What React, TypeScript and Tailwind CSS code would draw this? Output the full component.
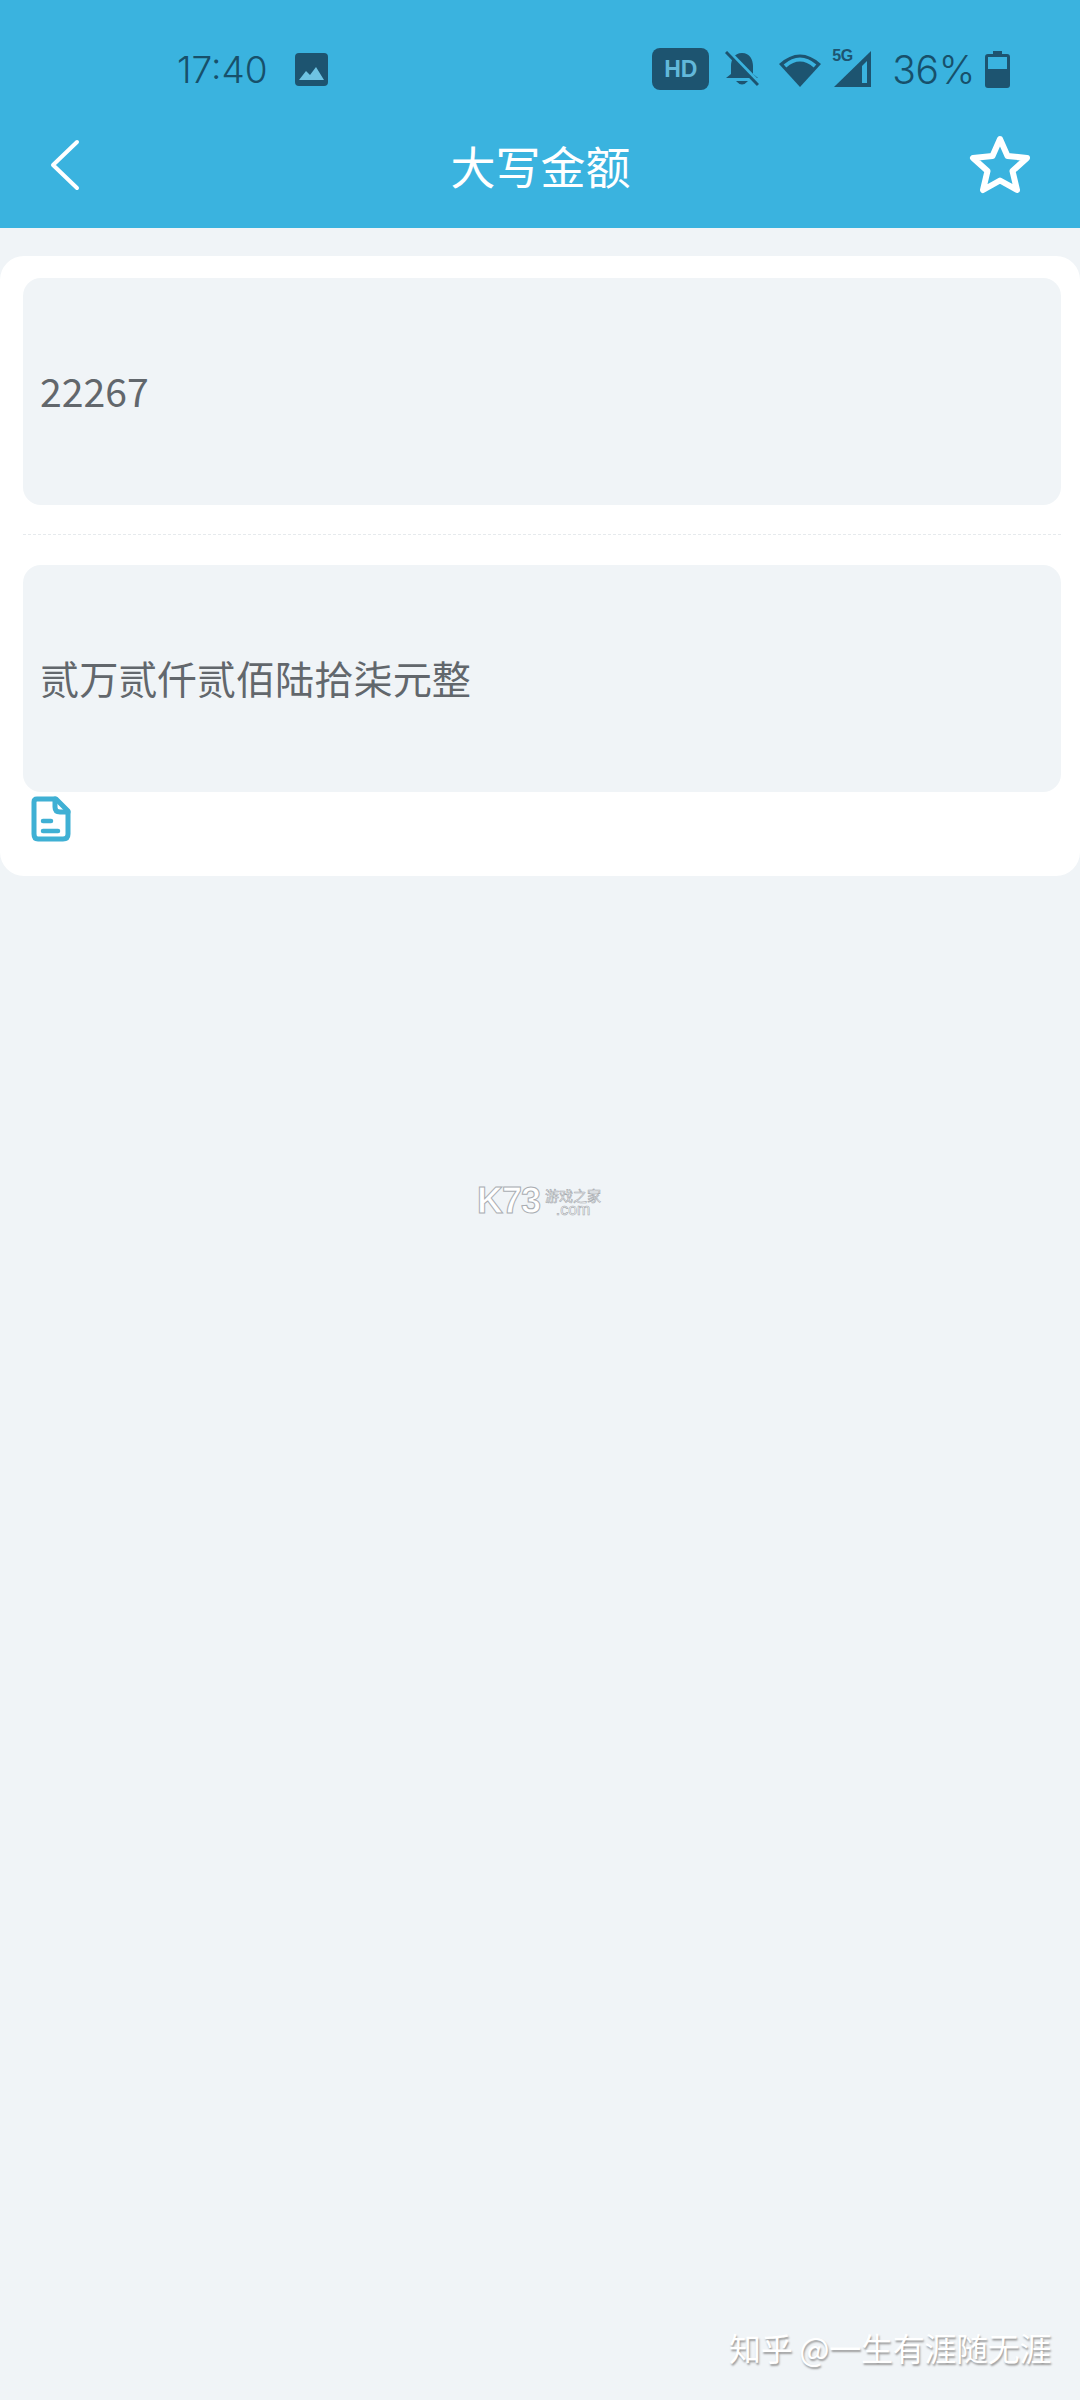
import React from 'react'

const cjk = "font-['Noto_Sans_CJK_SC',sans-serif]"
const statusFont = "font-['Inter','Liberation_Sans',sans-serif] font-light text-[#17506b]"

const StatusBar = () => (
  <div className="flex h-[44px] items-center pl-[177px] pr-[70px]">
    <span className={`${statusFont} text-[37px] leading-none`}>17:40</span>
    <svg className="ml-[27px]" width="33" height="33" viewBox="0 0 33 33">
      <rect width="33" height="33" rx="4" fill="#1d5470" />
      <path d="M4 27 L11 18 L15 22 L21 14 L29 27 Z" fill="#6fc3e2" />
    </svg>

    <div className="ml-auto flex items-center">
      <div className="flex h-[42px] w-[57px] items-center justify-center rounded-[8px] bg-[#1d5470]">
        <span className="font-['Liberation_Sans',sans-serif] text-[23px] font-bold leading-none text-[#62b8da]">HD</span>
      </div>
      <svg className="ml-[16px]" width="34" height="36" viewBox="0 0 34 36">
        <path d="M17 2 C9 2 6 9 6 15 L6 23 L1 27 L33 27 L28 23 L28 15 C28 9 25 2 17 2 Z" fill="#1d5470" />
        <path d="M11 30 Q17 37 23 30 Z" fill="#1d5470" />
        <path d="M4 1 L34 32" stroke="#3ab3df" strokeWidth="4" />
        <path d="M1 1 L33 34" stroke="#1d5470" strokeWidth="3" />
      </svg>
      <svg className="ml-[20px]" width="42" height="36" viewBox="0 0 42 36" fill="none">
        <path d="M0 13 Q21 -6 42 13 L21 36 Z" fill="#1d5470" />
        <path d="M6 15 Q21 2 36 15" stroke="#3ab3df" strokeWidth="4" />
      </svg>
      <div className="relative ml-[11px] h-[38px] w-[40px]">
        <svg className="absolute inset-0" width="40" height="38" viewBox="0 0 40 38">
          <path d="M2 37 L39 1 L39 37 Z" fill="#1d5470" />
          <path d="M30 16 L35 11 L35 33 L30 33 Z" fill="#3ab3df" />
        </svg>
        <span className="absolute -top-[2px] left-0 font-['Liberation_Sans',sans-serif] text-[16px] font-bold leading-none tracking-[-0.5px] text-[#1d5470]">5G</span>
      </div>
      <span className={`${statusFont} ml-[20px] text-[39px] leading-none tracking-[-0.3px]`}>36%</span>
      <svg className="ml-[10px]" width="25" height="37" viewBox="0 0 25 37">
        <path d="M8 0 H17 V3 H22 Q25 3 25 6 V34 Q25 37 22 37 H3 Q0 37 0 34 V6 Q0 3 3 3 H8 Z" fill="#1d5470" />
        <rect x="3" y="6" width="19" height="12" fill="#3ab3df" />
      </svg>
    </div>
  </div>
)

const NavBar = () => (
  <div className="mt-[44px] grid h-[60px] grid-cols-[1fr_auto_1fr] items-center pl-[50px] pr-[49px]">
    <svg className="justify-self-start" width="30" height="52" viewBox="0 0 30 52" fill="none">
      <path d="M27 3 L3 26 L27 49" stroke="#fff" strokeWidth="4" strokeLinecap="round" strokeLinejoin="round" />
    </svg>
    <h1 className={`${cjk} text-[45px] font-normal leading-none text-white`}>大写金额</h1>
    <svg className="justify-self-end" width="62" height="60" viewBox="0 0 62 60" fill="none">
      <path
        d="M31 4 L38.5 21 L58 23 L43.5 36 L48 55 L31 45.5 L14 55 L18.5 36 L4 23 L23.5 21 Z"
        stroke="#fff"
        strokeWidth="6"
        strokeLinejoin="round"
      />
    </svg>
  </div>
)

const Field = ({ value, textClass }: { value: string; textClass: string }) => (
  <div className="flex h-[227px] items-center rounded-[18px] bg-[#f0f4f7] px-[17px]">
    <p className={`${cjk} ${textClass} text-[39.2px] leading-none text-[#62676c]`}>{value}</p>
  </div>
)

const DocIcon = () => (
  <svg width="40" height="46" viewBox="0 0 40 46" fill="none" stroke="#3fb0d4" strokeLinejoin="round" strokeLinecap="round">
    <path d="M6 3 H25 L37 15 V38 Q37 43 32 43 H7 Q3 43 3 38 V6 Q3 3 6 3 Z" strokeWidth="5" />
    <path d="M24 3 V11 Q24 16 29 16 H37" strokeWidth="5" />
    <path d="M12 25 H20" strokeWidth="4.5" />
    <path d="M12 35 H27" strokeWidth="4.5" />
  </svg>
)

const App = () => {
  return (
    <div className="relative min-h-[2400px] w-[1080px] overflow-hidden bg-[#f0f4f7]">
      <header className="h-[228px] bg-[#3ab3df] pt-[47px]">
        <StatusBar />
        <NavBar />
      </header>

      <section className="mt-[28px] h-[620px] rounded-[24px] bg-white pl-[23px] pr-[19px] pt-[22px]">
        <Field value="22267" textClass="pb-[1px]" />
        <div className="mb-[30px] mt-[29px] border-t border-dashed border-[#e6eaed]" />
        <Field value="贰万贰仟贰佰陆拾柒元整" textClass="pb-[2px]" />
        <div className="pl-[8px] pt-[4px]">
          <DocIcon />
        </div>
      </section>

      {/* watermarks */}
      <div className="absolute left-[477px] top-[1183px] flex items-center gap-[5px]">
        <span className="font-['Liberation_Sans',sans-serif] text-[36px] font-bold leading-none tracking-[-1px] text-white [-webkit-text-stroke:1px_#a9adb2]">
          K73
        </span>
        <div className="flex flex-col items-center">
          <span className={`${cjk} text-[14px] leading-[16px] text-white [-webkit-text-stroke:0.6px_#a4a8ad]`}>游戏之家</span>
          <span className="font-['Liberation_Sans',sans-serif] text-[16px] leading-[13px] text-white [-webkit-text-stroke:0.6px_#a4a8ad]">.com</span>
        </div>
      </div>
      <p className={`${cjk} absolute left-[729px] top-[2331px] whitespace-nowrap text-[32px] leading-none tracking-[-0.3px] text-white [text-shadow:1px_2px_2px_#9a9a9a]`}>
        知乎 @一生有涯随无涯
      </p>
    </div>
  )
}

export default App
